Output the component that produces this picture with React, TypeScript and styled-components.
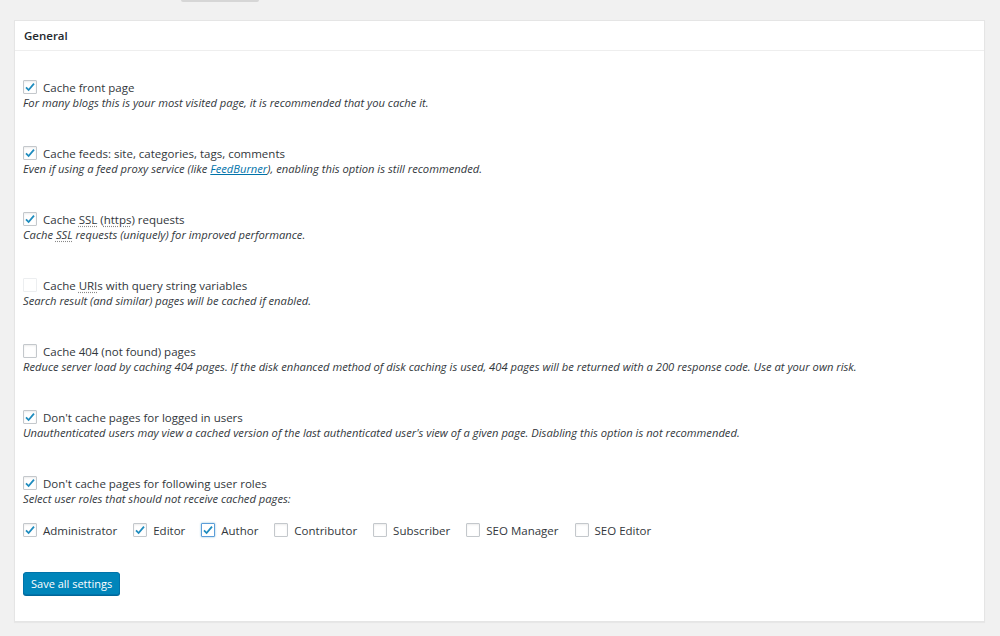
import React from "react";
import styled, { createGlobalStyle, css } from "styled-components";

const Global = createGlobalStyle`
  html, body { margin: 0; padding: 0; background: #f1f1f1; }
  body { font-family: "Open Sans", "Noto Sans", sans-serif; color: #23282d; }
`;

const Page = styled.div`
  display: flex;
  flex-direction: column;
  padding: 0 15px 15px 14px;
  width: 1000px;
  box-sizing: border-box;
`;

const TabStrip = styled.div`
  display: flex;
  padding-left: 167px;
  height: 20px;
`;

const Tab = styled.div`
  width: 78px;
  height: 2px;
  background: #d6d6d6;
  border-radius: 0 0 2px 2px;
`;

const Panel = styled.div`
  background: #fff;
  border: 1px solid #e5e5e5;
  box-shadow: 0 1px 1px rgba(0, 0, 0, 0.04);
  display: flex;
  flex-direction: column;
`;

const PanelHeader = styled.div`
  height: 29px;
  display: flex;
  align-items: center;
  padding-left: 9px;
  border-bottom: 1px solid #eee;
  font-size: 11.5px;
  font-weight: 600;
  color: #23282d;
`;

const PanelBody = styled.div`
  display: flex;
  flex-direction: column;
  padding: 28px 8px 26px 8px;
`;

const Option = styled.div<{ $last?: boolean }>`
  display: flex;
  flex-direction: column;
  margin-bottom: ${(p) => (p.$last ? "0" : "35px")};
`;

const LabelRow = styled.label`
  display: flex;
  align-items: center;
  height: 16px;
  gap: 6px;
  font-size: 11.5px;
  color: #32373c;
`;

const Box = styled.span<{ $checked?: boolean; $focus?: boolean; $faint?: boolean }>`
  width: 14px;
  height: 14px;
  box-sizing: border-box;
  border: 1px solid #c4c8cc;
  border-radius: 1px;
  background: #fff;
  box-shadow: inset 0 1px 2px rgba(0, 0, 0, 0.08);
  display: flex;
  align-items: center;
  justify-content: center;
  flex: none;
  ${(p) =>
    p.$faint &&
    css`
      border-color: #eceef0;
      box-shadow: none;
    `}
  ${(p) =>
    p.$focus &&
    css`
      border-color: #5b9dd9;
      box-shadow: 0 0 2px rgba(30, 140, 190, 0.6);
    `}
`;

const Desc = styled.div`
  font-size: 11.2px;
  font-style: italic;
  line-height: 15px;
  color: #32373c;
`;

const Abbr = styled.abbr`
  text-decoration: underline dotted;
  text-underline-offset: 2px;
  text-decoration-color: #888;
`;

const Link = styled.a`
  color: #0073aa;
  text-decoration: underline;
`;

const RolesRow = styled.div`
  display: flex;
  align-items: center;
  gap: 16px;
  margin-top: 16px;
`;

const SaveButton = styled.button`
  align-self: flex-start;
  margin-top: 34px;
  height: 23px;
  padding: 0 7px;
  font-family: inherit;
  font-size: 11px;
  color: #fff;
  background: #0085ba;
  border: 1px solid #0073aa;
  border-radius: 3px;
  box-shadow: 0 1px 0 #006799;
  cursor: pointer;
`;

const Check = () => (
  <svg width="12" height="12" viewBox="0 0 12 12">
    <path d="M2 6.3 L4.6 9 L10 2.6" fill="none" stroke="#1e8cbe" strokeWidth="1.8" />
  </svg>
);

const CheckBox = ({ checked, focus, faint }: { checked?: boolean; focus?: boolean; faint?: boolean }) => (
  <Box $checked={checked} $focus={focus} $faint={faint}>
    {checked && <Check />}
  </Box>
);

const roles: { name: string; checked: boolean; focus?: boolean }[] = [
  { name: "Administrator", checked: true },
  { name: "Editor", checked: true },
  { name: "Author", checked: true, focus: true },
  { name: "Contributor", checked: false },
  { name: "Subscriber", checked: false },
  { name: "SEO Manager", checked: false },
  { name: "SEO Editor", checked: false },
];

export default function App() {
  return (
    <>
      <Global />
      <Page>
        <TabStrip>
          <Tab />
        </TabStrip>
        <Panel>
          <PanelHeader>General</PanelHeader>
          <PanelBody>
            <Option>
              <LabelRow>
                <CheckBox checked />
                Cache front page
              </LabelRow>
              <Desc>For many blogs this is your most visited page, it is recommended that you cache it.</Desc>
            </Option>
            <Option>
              <LabelRow>
                <CheckBox checked />
                Cache feeds: site, categories, tags, comments
              </LabelRow>
              <Desc>
                Even if using a feed proxy service (like <Link href="#">FeedBurner</Link>), enabling this option is still
                recommended.
              </Desc>
            </Option>
            <Option>
              <LabelRow>
                <CheckBox checked />
                <span>
                  Cache <Abbr>SSL</Abbr> (<Abbr>https</Abbr>) requests
                </span>
              </LabelRow>
              <Desc>
                Cache <Abbr>SSL</Abbr> requests (uniquely) for improved performance.
              </Desc>
            </Option>
            <Option>
              <LabelRow>
                <CheckBox faint />
                <span>
                  Cache <Abbr>URI</Abbr>s with query string variables
                </span>
              </LabelRow>
              <Desc>Search result (and similar) pages will be cached if enabled.</Desc>
            </Option>
            <Option>
              <LabelRow>
                <CheckBox />
                Cache 404 (not found) pages
              </LabelRow>
              <Desc>
                Reduce server load by caching 404 pages. If the disk enhanced method of disk caching is used, 404 pages
                will be returned with a 200 response code. Use at your own risk.
              </Desc>
            </Option>
            <Option>
              <LabelRow>
                <CheckBox checked />
                Don't cache pages for logged in users
              </LabelRow>
              <Desc>
                Unauthenticated users may view a cached version of the last authenticated user's view of a given page.
                Disabling this option is not recommended.
              </Desc>
            </Option>
            <Option $last>
              <LabelRow>
                <CheckBox checked />
                Don't cache pages for following user roles
              </LabelRow>
              <Desc>Select user roles that should not receive cached pages:</Desc>
            </Option>
            <RolesRow>
              {roles.map((r) => (
                <LabelRow key={r.name}>
                  <CheckBox checked={r.checked} focus={r.focus} />
                  {r.name}
                </LabelRow>
              ))}
            </RolesRow>
            <SaveButton>Save all settings</SaveButton>
          </PanelBody>
        </Panel>
      </Page>
    </>
  );
}
